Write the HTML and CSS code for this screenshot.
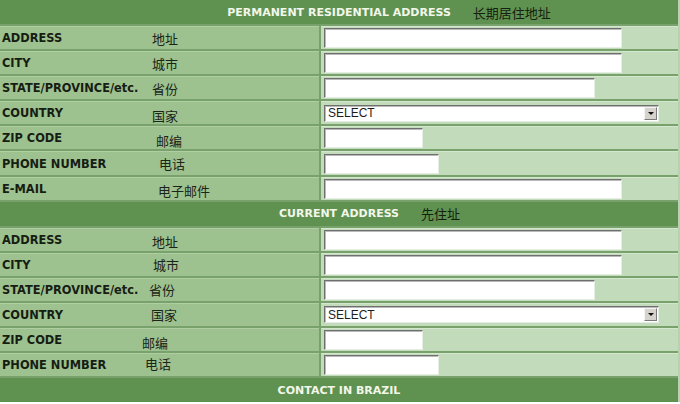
FILE: index.html
```html
<!DOCTYPE html>
<html lang="zh">
<head>
    <meta charset="UTF-8"/>
    <title>Address form</title>
    <link rel="stylesheet" href="styles.css">
</head>
<body>

<div class="form">

    <!-- Permanent address -->
    <div class="section-head">
        <span class="en">PERMANENT RESIDENTIAL ADDRESS</span>
        <span class="cn">长期居住地址</span>
    </div>

    <div class="row">
        <div class="label"><span class="en">ADDRESS</span><span class="cn">地址</span></div>
        <div class="field"><input type="text" class="w-long"></div>
    </div>
    <div class="row">
        <div class="label"><span class="en">CITY</span><span class="cn">城市</span></div>
        <div class="field"><input type="text" class="w-long"></div>
    </div>
    <div class="row">
        <div class="label"><span class="en">STATE/PROVINCE/etc.</span><span class="cn">省份</span></div>
        <div class="field"><input type="text" class="w-state"></div>
    </div>
    <div class="row">
        <div class="label"><span class="en">COUNTRY</span><span class="cn low">国家</span></div>
        <div class="field">
            <div class="select"><span>SELECT</span><span class="arrow"></span></div>
        </div>
    </div>
    <div class="row">
        <div class="label"><span class="en">ZIP CODE</span><span class="cn right-4 low">邮编</span></div>
        <div class="field"><input type="text" class="w-zip"></div>
    </div>
    <div class="row">
        <div class="label"><span class="en">PHONE NUMBER</span><span class="cn right-7">电话</span></div>
        <div class="field"><input type="text" class="w-phone"></div>
    </div>
    <div class="row">
        <div class="label"><span class="en">E-MAIL</span><span class="cn right-6 low">电子邮件</span></div>
        <div class="field"><input type="text" class="w-long"></div>
    </div>

    <!-- Current address -->
    <div class="section-head">
        <span class="en">CURRENT ADDRESS</span>
        <span class="cn">先住址</span>
    </div>

    <div class="row">
        <div class="label"><span class="en">ADDRESS</span><span class="cn low">地址</span></div>
        <div class="field"><input type="text" class="w-long"></div>
    </div>
    <div class="row">
        <div class="label"><span class="en">CITY</span><span class="cn right-1">城市</span></div>
        <div class="field"><input type="text" class="w-long"></div>
    </div>
    <div class="row">
        <div class="label"><span class="en">STATE/PROVINCE/etc.</span><span class="cn left-3">省份</span></div>
        <div class="field"><input type="text" class="w-state"></div>
    </div>
    <div class="row">
        <div class="label"><span class="en">COUNTRY</span><span class="cn left-1">国家</span></div>
        <div class="field">
            <div class="select"><span>SELECT</span><span class="arrow"></span></div>
        </div>
    </div>
    <div class="row">
        <div class="label"><span class="en">ZIP CODE</span><span class="cn left-10 low">邮编</span></div>
        <div class="field"><input type="text" class="w-zip"></div>
    </div>
    <div class="row">
        <div class="label"><span class="en">PHONE NUMBER</span><span class="cn left-7 high">电话</span></div>
        <div class="field"><input type="text" class="w-phone"></div>
    </div>

    <!-- Contact -->
    <div class="section-head">
        <span class="en">CONTACT IN BRAZIL</span>
        <span class="cn"></span>
    </div>

</div>

</body>
</html>
```

FILE: styles.css
```css
body {
    margin: 0;
    font-family: "DejaVu Sans", Verdana, sans-serif;
    background-color: #ffffff;
}

.form {
    width: 678px;
    display: flex;
    flex-direction: column;
    gap: 2px;
    background-color: #78a16c;
    border-right: 2px solid #b7d2ae;
}

.section-head {
    flex-shrink: 0;
    height: 24px;
    display: grid;
    grid-template-columns: 1fr auto 1fr;
    align-items: center;
    background-color: #5f9151;
}

.section-head .en {
    grid-column: 2;
    font-size: 11px;
    font-weight: bold;
    color: #f2f7ea;
}

.section-head .cn {
    grid-column: 3;
    margin-left: 22px;
    font-family: "Noto Sans CJK SC", sans-serif;
    font-size: 13px;
    color: #15210f;
}

.row {
    flex-shrink: 0;
    height: 23.1px;
    display: grid;
    grid-template-columns: 319px 1fr;
    column-gap: 2px;
}

.label {
    display: flex;
    align-items: center;
    background-color: #9dc18f;
    border-top: 1px solid #afcfa3;
    padding-left: 2px;
}

.label .en {
    width: 150px;
    flex-shrink: 0;
    font-size: 11.4px;
    font-weight: bold;
    color: #161d12;
}

.label .cn {
    font-family: "Noto Sans CJK SC", sans-serif;
    font-size: 13px;
    color: #1b2418;
    position: relative;
}

.cn.low { top: 2px; }
.cn.high { top: -2px; }
.cn.right-1 { left: 1px; }
.cn.right-4 { left: 4px; }
.cn.right-6 { left: 6px; }
.cn.right-7 { left: 7px; }
.cn.left-1 { left: -1px; }
.cn.left-3 { left: -3px; }
.cn.left-7 { left: -7px; }
.cn.left-10 { left: -10px; }

.field {
    display: flex;
    align-items: center;
    background-color: #c1dbbb;
    border-top: 1px solid #d3e6ce;
    padding-left: 3px;
}

input[type="text"] {
    box-sizing: border-box;
    height: 20px;
    margin: 0;
    padding: 0 2px;
    background-color: #ffffff;
    border: 1px solid;
    border-color: #6f6f6f #e6eee3 #e6eee3 #6f6f6f;
    box-shadow: inset 1px 1px 0 #b9b9b9;
    font-size: 12px;
}

.w-long { width: 298px; }
.w-state { width: 271px; }
.w-zip { width: 99px; }
.w-phone { width: 115px; }

.select {
    box-sizing: border-box;
    width: 335px;
    height: 17px;
    display: flex;
    align-items: center;
    justify-content: space-between;
    background-color: #ffffff;
    border: 1px solid;
    border-color: #6f6f6f #e6eee3 #e6eee3 #6f6f6f;
    box-shadow: inset 1px 1px 0 #b9b9b9;
    padding-left: 3px;
    font-family: "Liberation Sans", Arial, sans-serif;
    font-size: 12px;
    color: #1d1d1d;
}

.select .arrow {
    width: 13px;
    height: 13px;
    margin-right: 1px;
    background-color: #d6d3cc;
    border: 1px solid;
    border-color: #f4f4f4 #7b7b7b #7b7b7b #f4f4f4;
    box-sizing: border-box;
    display: flex;
    align-items: center;
    justify-content: center;
}

.select .arrow::after {
    content: "";
    border-left: 3px solid transparent;
    border-right: 3px solid transparent;
    border-top: 3px solid #111111;
}
```
